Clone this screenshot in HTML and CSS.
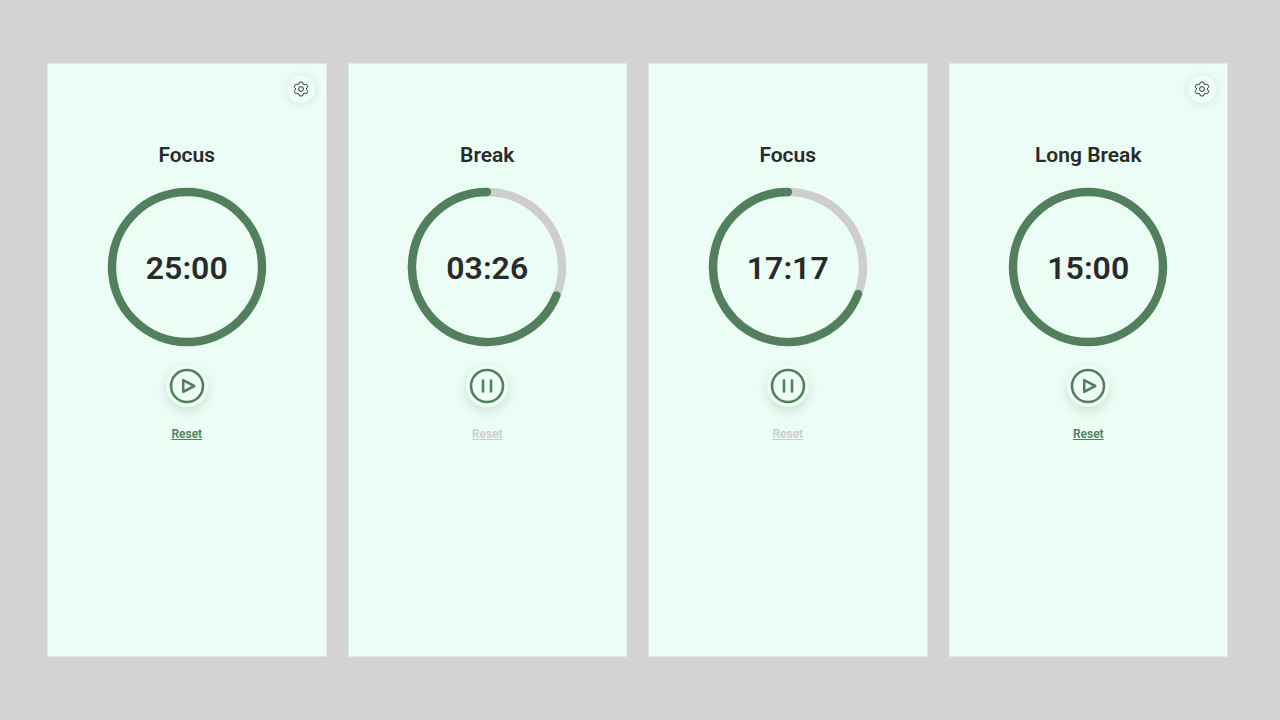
FILE: index.html
```html
<!DOCTYPE html>
<html lang="en">
<head>
<meta charset="utf-8">
<meta name="viewport" content="width=device-width, initial-scale=1">
<title>Focus Timer</title>
<link rel="stylesheet" href="styles.css">
</head>
<body>
<svg class="sprite" aria-hidden="true">
  <symbol id="gear" viewBox="0 0 24 24">
    <circle cx="12" cy="12" r="3.6"/>
    <path d="M8.8 4.6 L9.3 2.6 Q9.6 1.6 10.5 1.6 H13.5 Q14.4 1.6 14.7 2.6 L15.2 4.6 L16.8 5.5 L19 4.9 Q20 4.6 20.5 5.5 L22 8 Q22.5 8.9 21.7 9.6 L20.2 11 V13 L21.7 14.4 Q22.5 15.1 22 16 L20.5 18.5 Q20 19.4 19 19.1 L16.8 18.5 L15.2 19.4 L14.7 21.4 Q14.4 22.4 13.5 22.4 H10.5 Q9.6 22.4 9.3 21.4 L8.8 19.4 L7.2 18.5 L5 19.1 Q4 19.4 3.5 18.5 L2 16 Q1.5 15.1 2.3 14.4 L3.8 13 V11 L2.3 9.6 Q1.5 8.9 2 8 L3.5 5.5 Q4 4.6 5 4.9 L7.2 5.5 Z"/>
  </symbol>
  <symbol id="play" viewBox="0 0 36 36">
    <circle cx="18" cy="18" r="16"/>
    <path d="M14.2 12.2 V23.8 L25.2 18 Z"/>
  </symbol>
  <symbol id="pause" viewBox="0 0 36 36">
    <circle cx="18" cy="18" r="16"/>
    <path d="M14 12.5 V23.5 M22 12.5 V23.5"/>
  </symbol>
</svg>
<main class="board">
  <section class="screen">
    <header class="toolbar"><button class="settings" type="button" aria-label="Settings"><svg class="gear"><use href="#gear"/></svg></button></header>
    <h2 class="title">Focus</h2>
    <div class="dial">
      <svg class="ring" viewBox="0 0 160 160"><circle class="progress" cx="80" cy="80" r="75"/></svg>
      <time class="time">25:00</time>
    </div>
    <button class="toggle" type="button" aria-label="Start"><svg class="toggle-icon"><use href="#play"/></svg></button>
    <button class="reset" type="button">Reset</button>
  </section>
  <section class="screen">
    <header class="toolbar"></header>
    <h2 class="title">Break</h2>
    <div class="dial">
      <svg class="ring" viewBox="0 0 160 160"><circle class="track" cx="80" cy="80" r="75"/><path class="progress" d="M80 5 A75 75 0 1 0 149.4 108.4"/></svg>
      <time class="time">03:26</time>
    </div>
    <button class="toggle" type="button" aria-label="Pause"><svg class="toggle-icon"><use href="#pause"/></svg></button>
    <button class="reset" type="button" disabled>Reset</button>
  </section>
  <section class="screen">
    <header class="toolbar"></header>
    <h2 class="title">Focus</h2>
    <div class="dial">
      <svg class="ring" viewBox="0 0 160 160"><circle class="track" cx="80" cy="80" r="75"/><path class="progress" d="M80 5 A75 75 0 1 0 150 107"/></svg>
      <time class="time">17:17</time>
    </div>
    <button class="toggle" type="button" aria-label="Pause"><svg class="toggle-icon"><use href="#pause"/></svg></button>
    <button class="reset" type="button" disabled>Reset</button>
  </section>
  <section class="screen">
    <header class="toolbar"><button class="settings" type="button" aria-label="Settings"><svg class="gear"><use href="#gear"/></svg></button></header>
    <h2 class="title">Long Break</h2>
    <div class="dial">
      <svg class="ring" viewBox="0 0 160 160"><circle class="progress" cx="80" cy="80" r="75"/></svg>
      <time class="time">15:00</time>
    </div>
    <button class="toggle" type="button" aria-label="Start"><svg class="toggle-icon"><use href="#play"/></svg></button>
    <button class="reset" type="button">Reset</button>
  </section>
</main>
</body>
</html>
```
FILE: styles.css
```css
* {
  box-sizing: border-box;
}

body {
  margin: 0;
  background: #d3d3d3;
  color: #2a2a2a;
  font-family: Roboto, "Liberation Sans", sans-serif;
}

button {
  margin: 0;
  padding: 0;
  border: 0;
  font: inherit;
  cursor: pointer;
}

.sprite {
  display: none;
}

.board {
  display: grid;
  grid-template-columns: repeat(4, 1fr);
  gap: 21px;
  min-height: 100vh;
  padding: 63px 52px 63px 47px;
}

.screen {
  display: flex;
  flex-direction: column;
  align-items: center;
  padding: 11px;
  border: 1px solid #dfe8e3;
  background: #ebfdf5;
}

.toolbar {
  display: flex;
  justify-content: flex-end;
  width: 100%;
  height: 67px;
}

.settings {
  display: grid;
  place-items: center;
  width: 28px;
  height: 28px;
  border-radius: 50%;
  background: #effdf7;
  box-shadow: 0 1px 10px rgba(0, 0, 0, 0.1);
}

.gear {
  width: 16px;
  height: 16px;
  fill: none;
  stroke: #2a2a2a;
  stroke-width: 1.5;
  stroke-linejoin: round;
}

.title {
  margin: 0 0 19px;
  font-size: 21px;
  font-weight: 600;
  line-height: 26px;
}

.dial {
  display: grid;
  place-items: center;
  margin-bottom: 18px;
}

.ring,
.time {
  grid-area: 1 / 1;
}

.ring {
  width: 160px;
  height: 160px;
  fill: none;
  stroke-width: 8.4;
  stroke-linecap: round;
}

.track {
  stroke: #cecece;
}

.progress {
  stroke: #53805c;
}

.time {
  padding-top: 2px;
  font-size: 32px;
  font-weight: 600;
  line-height: 40px;
}

.toggle {
  display: grid;
  place-items: center;
  width: 42px;
  height: 42px;
  margin-bottom: 19px;
  border-radius: 50%;
  background: #effdf7;
  box-shadow: 0 4px 12px rgba(0, 0, 0, 0.12);
}

.toggle-icon {
  width: 36px;
  height: 36px;
  fill: none;
  stroke: #53805c;
  stroke-width: 2.6;
  stroke-linecap: round;
  stroke-linejoin: round;
}

.reset {
  background: none;
  color: #53805c;
  font-size: 12px;
  font-weight: 600;
  line-height: 16px;
  text-decoration: underline;
}

.reset:disabled {
  color: #cecece;
  cursor: default;
}
```
